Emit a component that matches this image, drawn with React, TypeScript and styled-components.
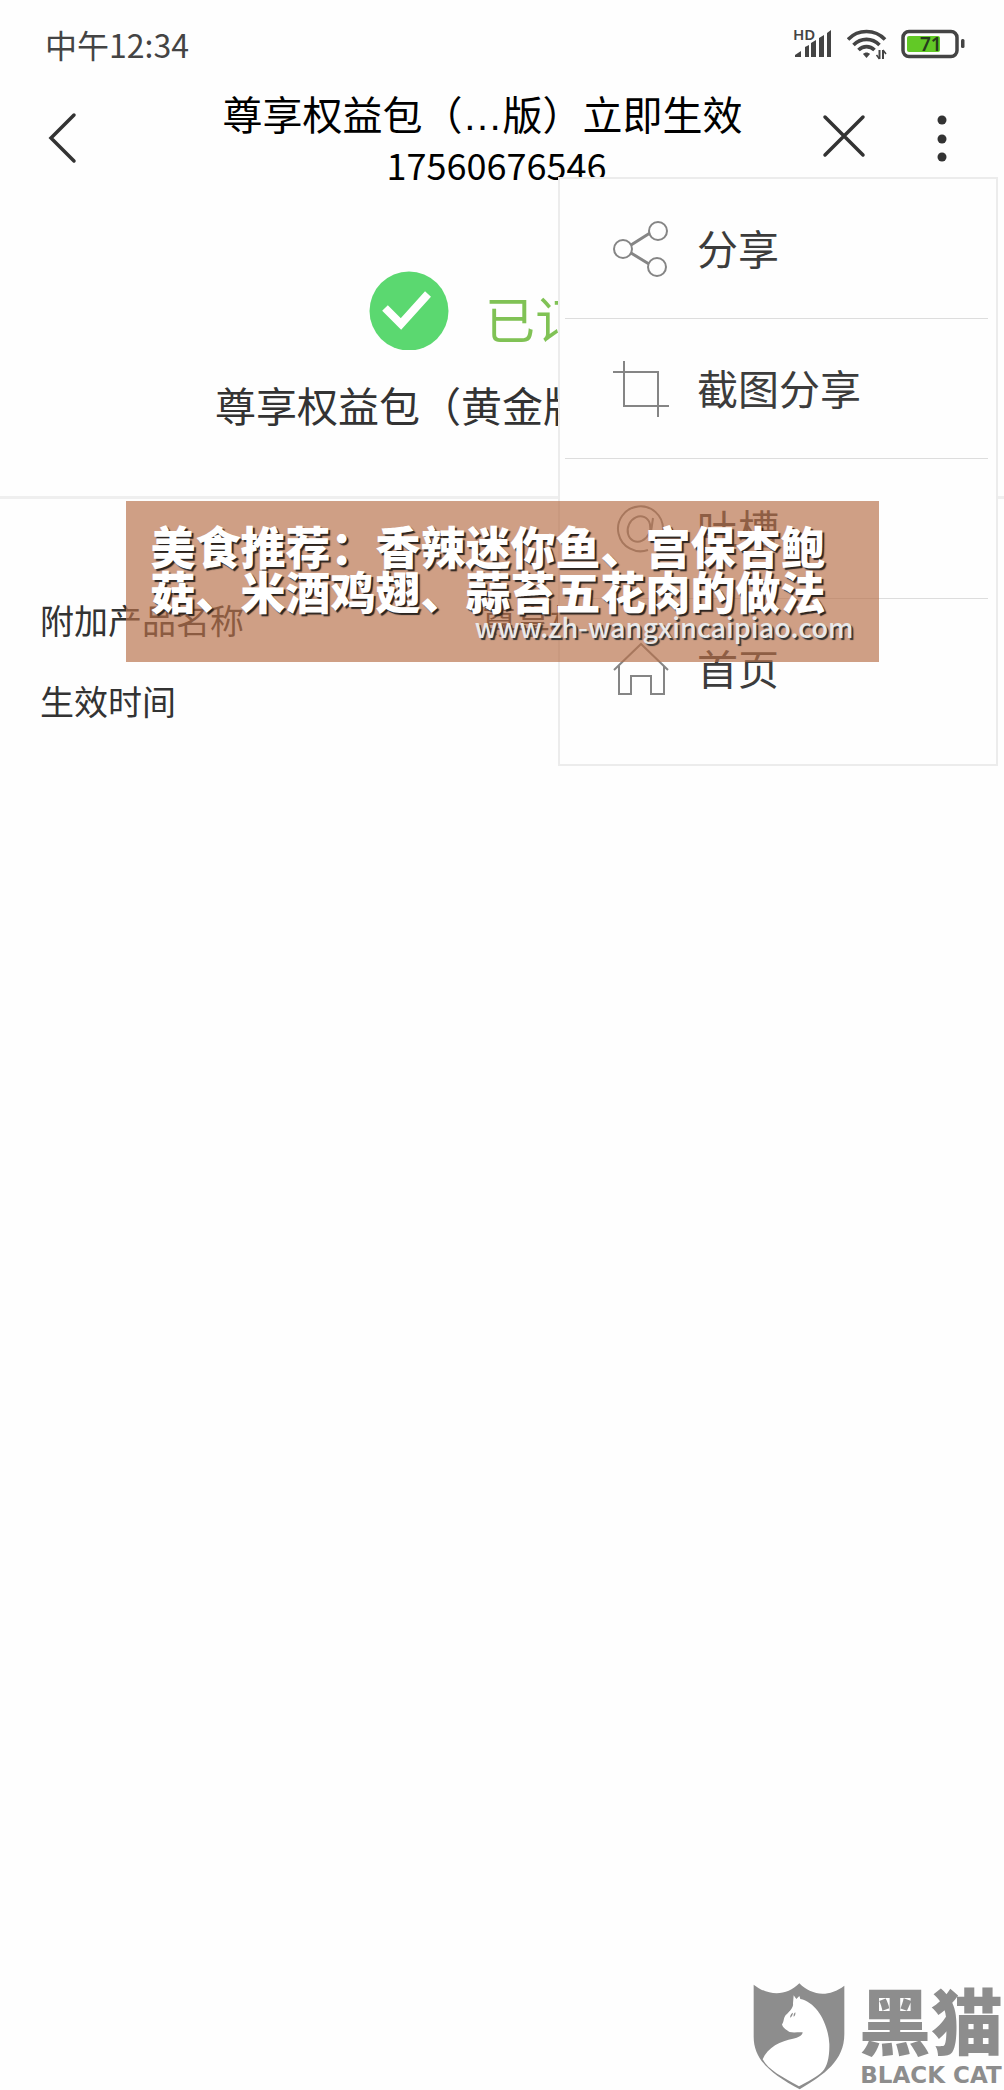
import React from 'react';
import styled, { createGlobalStyle } from 'styled-components';

const cjk = '"Noto Sans CJK SC", "Noto Sans", sans-serif';

const GlobalStyle = createGlobalStyle`
  * { box-sizing: border-box; }
  body { margin: 0; background: #fefefe; font-family: ${cjk}; }
  h1, h2, p, dl, dt, dd, ul { margin: 0; padding: 0; font-weight: 400; }
  button { margin: 0; padding: 0; border: 0; background: none; font: inherit; color: inherit; cursor: pointer; }
  svg { display: block; flex: none; }
`;

const Page = styled.div`
  position: relative;
  display: flex;
  flex-direction: column;
  min-height: 100vh;
  overflow: hidden;
`;

const StatusBar = styled.div`
  display: flex;
  align-items: center;
  justify-content: space-between;
  height: 88px;
  padding: 0 39px 0 45px;
  color: #444;
`;

const Clock = styled.time`
  font-size: 32px;
  line-height: 40px;
`;

const StatusIcons = styled.div`
  display: flex;
  align-items: center;
  gap: 14px;
`;

const Header = styled.header`
  display: flex;
  align-items: flex-start;
  height: 104px;
  padding: 0 33px 0 34px;
  color: #333;
`;

const HeaderSide = styled.div<{ $end?: boolean }>`
  display: flex;
  flex: 1;
  align-items: center;
  justify-content: ${p => (p.$end ? 'flex-end' : 'flex-start')};
  gap: 40px;
  height: 96px;
`;

const IconButton = styled.button`
  display: grid;
  place-items: center;
  width: 58px;
  height: 58px;
`;

const Title = styled.h1`
  padding-right: 40px;
  color: #000;
  text-align: center;
  white-space: nowrap;
`;

const TitleLine = styled.span`
  display: block;
  font: 400 40px/56px "Liberation Sans", ${cjk};
`;

const PhoneLine = styled.span`
  display: block;
  padding-left: 28px;
  font-size: 36px;
  line-height: 40px;
`;

const Summary = styled.section`
  display: flex;
  flex-direction: column;
  align-items: center;
  height: 307px;
  padding-top: 78px;
  border-bottom: 3px solid #efefef;
`;

const StatusRow = styled.div`
  display: flex;
  align-items: flex-start;
  gap: 36px;
`;

const StatusText = styled.p`
  padding-top: 12px;
  color: #80c255;
  font-size: 50px;
  line-height: 70px;
`;

const ProductName = styled.h2`
  margin-top: 22px;
  color: #333;
  font-size: 41px;
  line-height: 60px;
  white-space: nowrap;
`;

const Details = styled.dl`
  padding: 80px 46px 0 40px;
`;

const DetailRow = styled.div`
  display: flex;
  justify-content: space-between;
  height: 81px;
  color: #333;
  font-size: 34px;
  line-height: 82px;
  white-space: nowrap;
`;

const Menu = styled.ul`
  position: absolute;
  top: 177px;
  right: 6px;
  width: 440px;
  height: 589px;
  padding: 0 8px 0 5px;
  border: 2px solid #ececec;
  background: #fefefe;
  list-style: none;
`;

const MenuItem = styled.li`
  height: 140px;
  border-bottom: 1px solid #ddd;
  &:last-child { border-bottom: 0; }
`;

const MenuButton = styled.button`
  display: flex;
  align-items: center;
  gap: 28px;
  width: 100%;
  height: 139px;
  padding-left: 48px;
  color: #3c3c3c;
  font-size: 41px;
  line-height: 60px;
`;

const MenuLabel = styled.span`
  padding-bottom: 4px;
`;

const Banner = styled.aside`
  position: absolute;
  top: 501px;
  left: 12.5%;
  right: 12.5%;
  padding: 22px 25px;
  background: rgba(183, 112, 73, 0.67);
`;

const BannerText = styled.p`
  color: #fff;
  font-size: 45px;
  font-weight: 900;
  line-height: 45px;
  text-shadow: 2px 2px 1px #2b2420;
`;

const BannerLink = styled.a`
  display: block;
  color: #e9e9e9;
  font: 500 27px/27px ${cjk};
  text-align: right;
  text-decoration: none;
  text-shadow: 2px 2px 1px #333;
`;

const Footer = styled.footer`
  display: flex;
  align-items: flex-end;
  justify-content: flex-end;
  gap: 14px;
  margin-top: auto;
  padding-right: 1px;
  color: #8d8d8d;
`;

const Brand = styled.div`
  display: flex;
  flex-direction: column;
  align-items: center;
  font-weight: 900;
  white-space: nowrap;
`;

const BrandName = styled.span`
  font-size: 72px;
  line-height: 84px;
`;

const BrandLatin = styled.span`
  font: 700 23px/30px "DejaVu Sans", sans-serif;
`;

const Signal = () => (
  <svg width="40" height="48" viewBox="0 -8 40 48" fill="#444" aria-label="HD">
    <text x="0" y="12" fontFamily="Noto Sans" fontSize="15" fontWeight="600">HD</text>
    <path d="M2 29v-2l6-4v6zM12 29V19l4-2v12zM18 29V15l5-3v17zM26 29V10l5-3v22zM34 29V5l4-3v27z" />
  </svg>
);

const Wifi = () => (
  <svg width="40" height="32" viewBox="0 0 40 32" fill="none" stroke="#444" strokeWidth="3.6">
    <path d="M1 11.5C11 .8 28 .8 38 11.5M6.500 17C14 9.500 25 9.500 32.500 17M11.500 22c4.500-4.500 11.500-4.500 16 0" />
    <path d="M16 26c2-2 5-2 7 0l-3.500 4z" fill="#444" stroke="none" />
    <path d="M32.500 22v9M36 22v9" strokeWidth="2" />
    <path d="M32.500 31l-3-4M36 22l3 4" strokeWidth="1.500" />
  </svg>
);

const Battery = () => (
  <svg width="64" height="30" viewBox="0 0 64 30">
    <rect x="2" y="2.500" width="54" height="25" rx="6" fill="none" stroke="#444" strokeWidth="3.500" />
    <rect x="6" y="7" width="33" height="16" rx="2" fill="#62c926" />
    <rect x="60" y="10" width="3.500" height="9" rx="1.500" fill="#444" />
    <text x="19" y="22" fontFamily="Noto Sans" fontSize="19" fontWeight="600" fill="#263b1e">71</text>
  </svg>
);

const icon = { width: 56, height: 56, viewBox: '0 0 56 56', fill: 'none', stroke: '#858585', strokeWidth: 2 };

const ShareIcon = () => (
  <svg {...icon}>
    <circle cx="10" cy="28" r="9" />
    <circle cx="45" cy="10" r="9" />
    <circle cx="44" cy="46" r="9" />
    <path d="M18 24l19-12M18 32l18 11" strokeWidth="3" />
  </svg>
);

const CropIcon = () => (
  <svg {...icon}>
    <path d="M0 11h45v45M11 0v45h45" />
  </svg>
);

const AtIcon = () => (
  <svg {...icon}>
    <path d="M35 49A22.500 22.500 0 1 1 50 28c0 10-12 11-12 2" />
    <ellipse cx="26" cy="28" rx="11" ry="13" transform="rotate(25 26 28)" />
    <path d="M40 17l-2 14" />
  </svg>
);

const HomeIcon = () => (
  <svg {...icon}>
    <path d="M1 29L28 3l27 26M6 25v28h12V35h20v18h13V25" />
  </svg>
);

const Shield = () => (
  <svg width="92" height="108" viewBox="40 36 276 324" aria-hidden="true">
    <path fill="#8d8d8d" d="M42 44C88 80 142 78 179 40c38 38 88 42 135 7v145c0 80-60 122-134 166C98 314 42 272 42 200z" />
    <path fill="#fff" d="M162 76l8 11 9-9 3 9C230 96 266 160 269 222C270 262 262 290 249 304C235 320 200 338 178 349C130 322 85 300 69 268C82 232 125 212 160 206C176 203 188 197 189 187C176 186 162 189 150 186C140 180 128 172 127 163C134 156 130 140 142 132C152 122 162 112 160 100z" />
    <path fill="#8d8d8d" d="M151 143c1-9 5-14 9-15-1 8-4 13-9 15zM162 140c-1-6 1-11 5-13 1 6-1 11-5 13z" />
  </svg>
);

const menuItems = [
  { label: '分享', Icon: ShareIcon },
  { label: '截图分享', Icon: CropIcon },
  { label: '吐槽', Icon: AtIcon },
  { label: '首页', Icon: HomeIcon },
];

export default function App() {
  return (
    <Page lang="zh-CN">
      <GlobalStyle />
      <StatusBar>
        <Clock>中午12:34</Clock>
        <StatusIcons><Signal /><Wifi /><Battery /></StatusIcons>
      </StatusBar>
      <Header>
        <HeaderSide>
          <IconButton aria-label="返回">
            <svg width="58" height="58" viewBox="0 0 58 58" fill="none" stroke="#333" strokeWidth="3.5" strokeLinecap="round"><path d="M40 8L17 31l23 23" /></svg>
          </IconButton>
        </HeaderSide>
        <Title>
          <TitleLine>尊享权益包（…版）立即生效</TitleLine>
          <PhoneLine>17560676546</PhoneLine>
        </Title>
        <HeaderSide $end>
          <IconButton aria-label="关闭">
            <svg width="58" height="58" viewBox="0 0 58 58" fill="none" stroke="#333" strokeWidth="3.5" strokeLinecap="round"><path d="M10 10l38 38M48 10L10 48" /></svg>
          </IconButton>
          <IconButton aria-label="更多">
            <svg width="58" height="58" viewBox="0 0 58 58" fill="#333"><circle cx="29" cy="13" r="4.500" /><circle cx="29" cy="32" r="4.500" /><circle cx="29" cy="50" r="4.500" /></svg>
          </IconButton>
        </HeaderSide>
      </Header>
      <Summary>
        <StatusRow>
          <svg width="80" height="80" viewBox="0 0 80 80">
            <circle cx="40" cy="41" r="39.5" fill="#5bd870" />
            <path d="M16 38l16 16 27-30" fill="none" stroke="#fff" strokeWidth="8" />
          </svg>
          <StatusText>已订购</StatusText>
        </StatusRow>
        <ProductName>尊享权益包（黄金版）立即生效</ProductName>
      </Summary>
      <Details>
        <DetailRow><dt>附加产品名称</dt><dd>尊享权益包（黄金版）立即生效</dd></DetailRow>
        <DetailRow><dt>生效时间</dt></DetailRow>
      </Details>
      <Menu>
        {menuItems.map(({ label, Icon }) => (
          <MenuItem key={label}><MenuButton><Icon /><MenuLabel>{label}</MenuLabel></MenuButton></MenuItem>
        ))}
      </Menu>
      <Banner>
        <BannerText>美食推荐：香辣迷你鱼、宫保杏鲍菇、米酒鸡翅、蒜苔五花肉的做法</BannerText>
        <BannerLink href="#">www.zh-wangxincaipiao.com</BannerLink>
      </Banner>
      <Footer>
        <Shield />
        <Brand>
          <BrandName>黑猫</BrandName>
          <BrandLatin>BLACK CAT</BrandLatin>
        </Brand>
      </Footer>
    </Page>
  );
}
